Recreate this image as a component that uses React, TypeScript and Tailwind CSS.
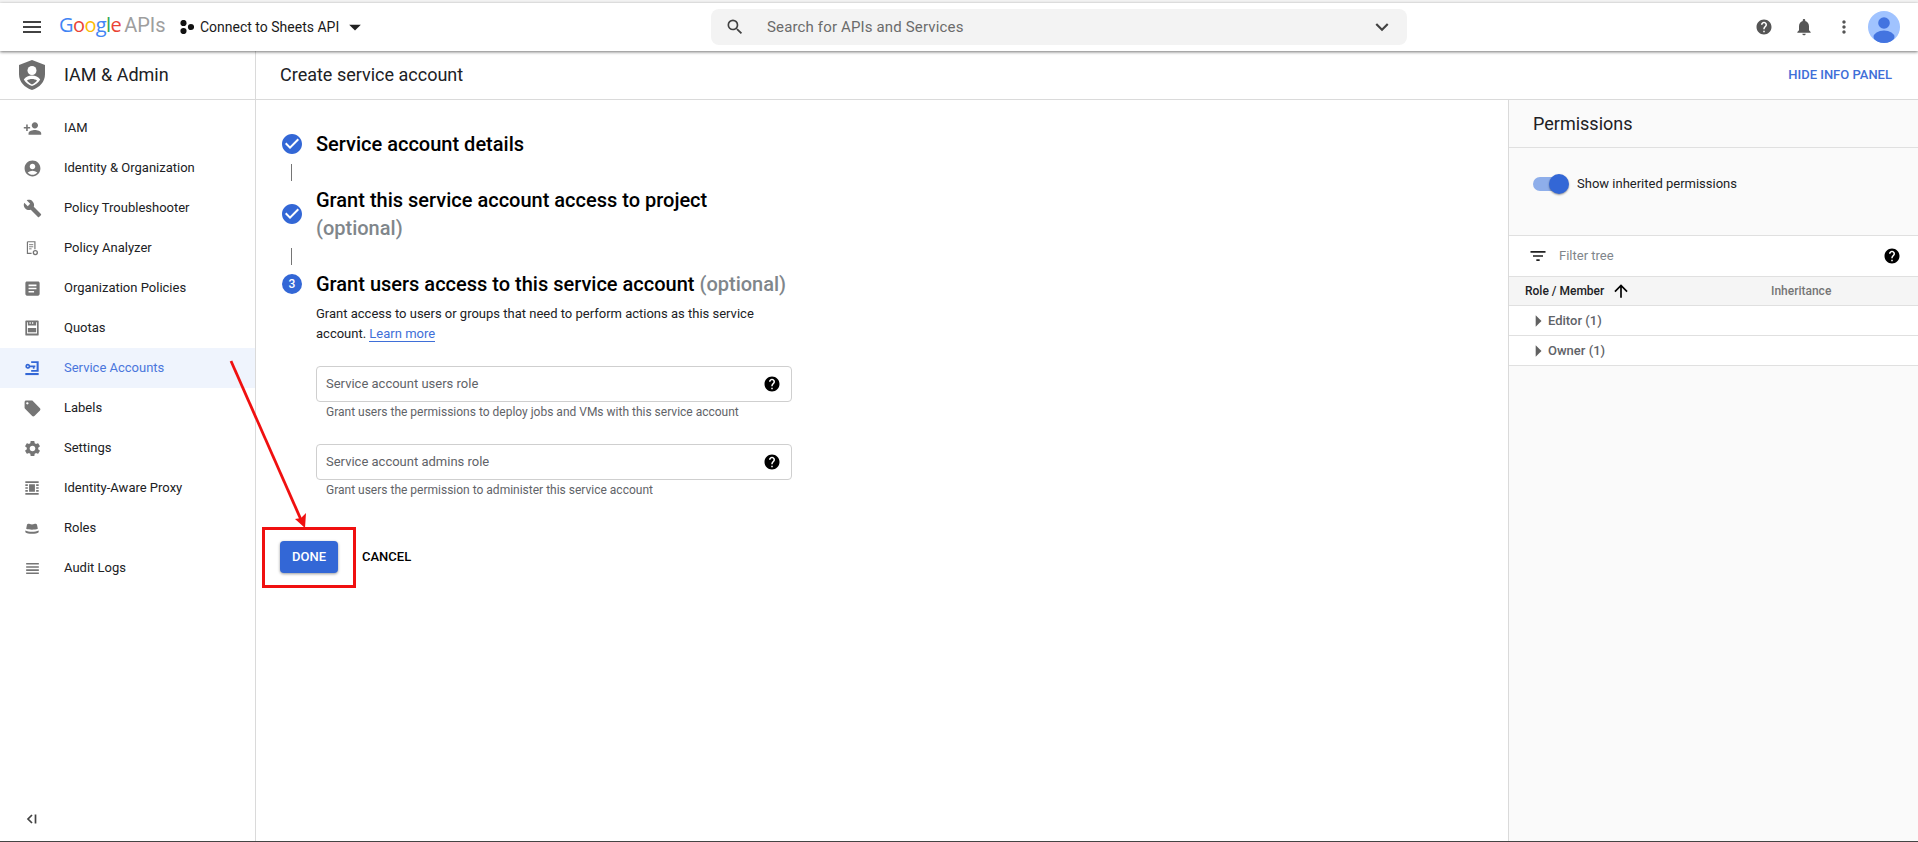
import React from "react";
import {
  MdMenu, MdArrowDropDown, MdSearch, MdExpandMore, MdHelp, MdNotifications, MdMoreVert,
  MdPersonAdd, MdAccountCircle, MdBuild, MdArticle, MdLocalOffer, MdSettings, MdViewHeadline,
  MdCheckCircle, MdFilterList, MdArrowUpward, MdArrowRight,
} from "react-icons/md";

const Analyzer = () => (
  <svg viewBox="0 0 24 24" className="w-[20px] h-[20px]" fill="none" stroke="#757575">
    <path d="M6.5 4.5h9v9M6.5 4.5v14h5" strokeWidth="1.4" />
    <path d="M8.5 8h5M8.5 10.5h5M8.5 13h3" strokeWidth="1.1" />
    <circle cx="16" cy="17.500" r="2.400" strokeWidth="1.600" />
  </svg>
);
const Quota = () => (
  <svg viewBox="0 0 24 24" className="w-[20px] h-[20px]" fill="#757575">
    <path d="M5 3h14a1 1 0 0 1 1 1v16a1 1 0 0 1-1 1H5a1 1 0 0 1-1-1V4a1 1 0 0 1 1-1zm1 2v13.500h12V5h-1v4H7V5H6zm3 0v2h1.500V5H9zm3 0v2h1.500V5H12zM7 12h10v5H7v-5z" fillRule="evenodd" />
  </svg>
);
const ServiceKey = () => (
  <svg viewBox="0 0 24 24" className="w-[20px] h-[20px]" fill="#3367d6">
    <path d="M4 18h16v2.500H4z" />
    <path d="M11 4h9v12.500h-9v-2h6.500V6H11z" />
    <path fillRule="evenodd" d="M7 7a3 3 0 0 1 2.800 2H16v2h-1v2h-2v-2H9.800A3 3 0 1 1 7 7zm0 2a1 1 0 1 0 0 2 1 1 0 0 0 0-2z" />
  </svg>
);
const Proxy = () => (
  <svg viewBox="0 0 24 24" className="w-[20px] h-[20px]" fill="#757575">
    <path d="M4 4h16v2H4zM4 18h16v2H4zM4 7.500h3v2H4zM17 7.500h3v2h-3zM4 14.500h3v2H4zM17 14.500h3v2h-3zM4 11h3v2H4zM17 11h3v2h-3zM8.500 7.500h7v9h-7z" />
  </svg>
);
const Hat = () => (
  <svg viewBox="0 0 24 24" className="w-[20px] h-[20px]" fill="#757575">
    <path d="M7.500 7c1.500 0 2.500.8 4.500.8S15 7 16.500 7c1 0 1.500 1 1.700 2l.8 4c-2 .8-4.300 1-7 1s-5-.2-7-1l.8-4c.2-1 .7-2 1.700-2z" />
    <path d="M4 15c2 1 5 1.500 8 1.500s6-.5 8-1.500v2c-1.500 1.200-4.500 2-8 2s-6.500-.8-8-2v-2z" />
  </svg>
);
const Shield = () => (
  <svg viewBox="0 0 26 30" className="w-[26px] h-[30px]">
    <path d="M13 0 L26 5 V14 C26 22 20.500 27.500 13 30 C5.500 27.500 0 22 0 14 V5 Z" fill="#6e6e6e" />
    <circle cx="13" cy="10.500" r="4.500" fill="#fff" />
    <path d="M4.800 19.500c1.700-2.700 5-4 8.200-4s6.500 1.300 8.200 4c-1.800 3-4.800 5.400-8.200 6.500-3.400-1.100-6.400-3.500-8.200-6.500z" fill="#fff" />
    <path d="M8 20.500c1.300-1 3.200-1.500 5-1.500s3.700.5 5 1.500c-1.200 1.700-3 3-5 3.900-2-.9-3.800-2.200-5-3.900z" fill="#6e6e6e" />
  </svg>
);
const Project = () => (
  <svg viewBox="0 0 14 14" className="w-[14px] h-[14px]" fill="#111">
    <circle cx="3.500" cy="3" r="3.100" />
    <circle cx="3.500" cy="11" r="3.100" />
    <circle cx="11" cy="7" r="3.100" />
  </svg>
);
const Avatar = () => (
  <svg viewBox="0 0 32 32" className="w-[32px] h-[32px]">
    <defs>
      <clipPath id="avatar-clip"><circle cx="16" cy="16" r="16" /></clipPath>
    </defs>
    <g clipPath="url(#avatar-clip)">
      <rect width="32" height="32" fill="#a0c3ff" />
      <circle cx="16" cy="12" r="5.800" fill="#4374e0" />
      <ellipse cx="16" cy="26" rx="10.500" ry="6.500" fill="#4374e0" />
    </g>
  </svg>
);
const Collapse = () => (
  <svg viewBox="0 0 12 12" className="w-[12px] h-[12px]" fill="none" stroke="#424242" strokeWidth="1.700">
    <path d="M6 2 L2 6 L6 10" />
    <path d="M9.500 1.500 V10.500" />
  </svg>
);

const navIcon = "w-[19px] h-[19px] text-[#757575]";
const nav: { label: string; icon: React.ReactNode; active?: boolean }[] = [
  { label: "IAM", icon: <MdPersonAdd className={navIcon} /> },
  { label: "Identity & Organization", icon: <MdAccountCircle className={navIcon} /> },
  { label: "Policy Troubleshooter", icon: <MdBuild className={navIcon} /> },
  { label: "Policy Analyzer", icon: <Analyzer /> },
  { label: "Organization Policies", icon: <MdArticle className={navIcon} /> },
  { label: "Quotas", icon: <Quota /> },
  { label: "Service Accounts", icon: <ServiceKey />, active: true },
  { label: "Labels", icon: <MdLocalOffer className={navIcon} /> },
  { label: "Settings", icon: <MdSettings className={navIcon} /> },
  { label: "Identity-Aware Proxy", icon: <Proxy /> },
  { label: "Roles", icon: <Hat /> },
  { label: "Audit Logs", icon: <MdViewHeadline className={navIcon} /> },
];

const Field = ({ label, help }: { label: string; help: string }) => (
  <div className="flex flex-col">
    <div className="h-[36px] w-[476px] border border-[#cfcfcf] rounded-[4px] flex items-center justify-between pl-[9px] pr-[10px]">
      <span className="text-[13px] text-[#5f6368]">{label}</span>
      <MdHelp className="w-[18px] h-[18px] text-black" />
    </div>
    <div className="text-[12px] leading-[16px] text-[#5f6368] pl-[10px] mt-[2px]">{help}</div>
  </div>
);

const Connector = () => <div className="w-[1px] h-[17px] bg-[#757575] ml-[30px]" />;

export default function App() {
  return (
    <div className="relative w-[1918px] h-[842px] overflow-hidden bg-white flex flex-col text-black font-['Roboto',sans-serif]">
      <div className="h-[3px] bg-[#f3f3f3]" />
      <header className="relative z-10 h-[48px] flex items-center bg-white shadow-[0_1px_3px_rgba(0,0,0,0.55)]">
        <MdMenu className="w-[24px] h-[24px] text-[#424242] ml-[20px]" />
        <div className="ml-[15px] w-[106px] flex items-baseline text-[20px] leading-none font-['Open_Sans',sans-serif] -mt-[5px] tracking-[-0.6px]">
          <span className="text-[#4285f4]">G</span>
          <span className="text-[#ea4335]">o</span>
          <span className="text-[#fbbc05]">o</span>
          <span className="text-[#4285f4]">g</span>
          <span className="text-[#34a853]">l</span>
          <span className="text-[#ea4335]">e</span>
          <span className="text-[#9e9e9e] ml-[3px] font-['Roboto',sans-serif] tracking-normal">APIs</span>
        </div>
        <div className="ml-[15px]"><Project /></div>
        <span className="ml-[6px] text-[14px] text-[#1a1a1a] w-[141px] whitespace-nowrap">Connect to Sheets API</span>
        <MdArrowDropDown className="w-[28px] h-[28px] text-[#212121]" />
        <div className="ml-[342px] w-[696px] h-[36px] bg-[#f3f3f3] rounded-[8px] flex items-center pl-[14px] pr-[12px]">
          <MdSearch className="w-[20px] h-[20px] text-[#424242]" />
          <span className="ml-[22px] text-[15px] tracking-[0.15px] text-[#6b6b6b] flex-1">Search for APIs and Services</span>
          <MdExpandMore className="w-[26px] h-[26px] text-[#424242]" />
        </div>
        <div className="ml-auto flex items-center">
          <MdHelp className="w-[18px] h-[18px] text-[#555]" />
          <MdNotifications className="w-[20px] h-[20px] text-[#555] ml-[21px]" />
          <MdMoreVert className="w-[20px] h-[20px] text-[#555] ml-[20px]" />
          <div className="ml-[14px] mr-[18px] flex"><Avatar /></div>
        </div>
      </header>
      <div className="flex h-[49px]">
        <div className="w-[256px] border-r border-[#dadada] border-b flex items-center pl-[19px] pb-[1px]">
          <Shield />
          <span className="ml-[19px] text-[18px] text-[#202124]">IAM &amp; Admin</span>
        </div>
        <div className="flex-1 border-b border-[#dadada] flex items-center justify-between pl-[24px] pr-[26px] pb-[1px]">
          <span className="text-[18px] text-[#202124]">Create service account</span>
          <span className="text-[13px] font-medium text-[#3f6fd8]">HIDE INFO PANEL</span>
        </div>
      </div>
      <div className="flex flex-1 min-h-0">
        <aside className="w-[256px] border-r border-[#dadada] flex flex-col pt-[8px] pb-[16px]">
          {nav.map((n) => (
            <div key={n.label} className={`h-[40px] flex items-center pl-[20px] ${n.active ? "bg-[#eff4fd]" : ""}`}>
              <span className="w-[24px] h-[24px] flex items-center justify-center">{n.icon}</span>
              <span className={`ml-[20px] text-[13px] ${n.active ? "text-[#4a76dc]" : "text-[#202124]"}`}>{n.label}</span>
            </div>
          ))}
          <div className="mt-auto pl-[26px] flex"><Collapse /></div>
        </aside>
        <main className="flex-1 flex flex-col pl-[5px] pt-[32px]">
          <div className="w-[560px] flex flex-col">
            <div className="flex items-center h-[24px]">
              <MdCheckCircle className="w-[24px] h-[24px] text-[#3367d6] ml-[19px]" />
              <span className="ml-[12px] text-[20px] font-medium leading-[24px]">Service account details</span>
            </div>
            <div className="mt-[8px]"><Connector /></div>
            <div className="flex items-center mt-[5px]">
              <MdCheckCircle className="w-[24px] h-[24px] text-[#3367d6] ml-[19px] shrink-0" />
              <div className="ml-[12px] text-[20px] font-medium leading-[28px]">
                <div>Grant this service account access to project</div>
                <div className="text-[#80868b]">(optional)</div>
              </div>
            </div>
            <div className="mt-[6px]"><Connector /></div>
            <div className="flex items-center h-[24px] mt-[7px] whitespace-nowrap">
              <span className="ml-[21px] w-[20px] h-[20px] rounded-full bg-[#3367d6] text-white text-[12px] font-medium flex items-center justify-center">3</span>
              <span className="ml-[14px] text-[20px] font-medium leading-[24px]">Grant users access to this service account</span>
              <span className="ml-[5px] text-[20px] font-medium leading-[24px] text-[#80868b]">(optional)</span>
            </div>
            <p className="ml-[55px] mt-[8px] w-[490px] text-[13px] leading-[20px] text-[#202124]">
              Grant access to users or groups that need to perform actions as this service account.{" "}
              <span className="text-[#3f6fd8] border-b border-[#3f6fd8]">Learn more</span>
            </p>
            <div className="ml-[55px] mt-[22px] flex flex-col gap-[24px]">
              <Field label="Service account users role" help="Grant users the permissions to deploy jobs and VMs with this service account" />
              <Field label="Service account admins role" help="Grant users the permission to administer this service account" />
            </div>
            <div className="ml-[19px] mt-[43px] flex items-center">
              <button className="w-[58px] h-[32px] bg-[#3367d6] rounded-[4px] text-white text-[13px] font-medium shadow-[0_1px_3px_rgba(0,0,0,0.4)]">DONE</button>
              <span className="ml-[24px] text-[13px] font-medium text-black">CANCEL</span>
            </div>
          </div>
        </main>
        <section className="w-[410px] border-l border-[#dadada] bg-[#fafafa] flex flex-col">
          <div className="h-[48px] shrink-0 border-b border-[#e0e0e0] flex items-center pl-[24px] text-[18px] text-[#202124]">Permissions</div>
          <div className="h-[88px] shrink-0 border-b border-[#e0e0e0] flex pt-[26px] pl-[24px]">
            <div className="relative w-[36px] h-[20px] flex items-center">
              <div className="w-[34px] h-[14px] rounded-full bg-[#8eaeea]" />
              <div className="absolute right-0 top-0 w-[20px] h-[20px] rounded-full bg-[#3367d6] shadow-[0_1px_2px_rgba(0,0,0,0.4)]" />
            </div>
            <span className="ml-[8px] text-[13px] leading-[20px] text-[#202124]">Show inherited permissions</span>
          </div>
          <div className="h-[40px] shrink-0 bg-white flex items-center pl-[19px] pr-[17px]">
            <MdFilterList className="w-[20px] h-[20px] text-[#212121]" />
            <span className="ml-[11px] flex-1 text-[13px] text-[#80868b]">Filter tree</span>
            <MdHelp className="w-[18px] h-[18px] text-black" />
          </div>
          <div className="h-[30px] shrink-0 bg-[#f5f5f5] border-y border-[#e0e0e0] flex items-center text-[12px] font-medium pl-[16px]">
            <span className="w-[80px] text-[#202124] whitespace-nowrap">Role / Member</span>
            <MdArrowUpward className="w-[20px] h-[20px] text-black ml-[6px]" />
            <span className="ml-[140px] text-[#757575]">Inheritance</span>
          </div>
          {["Editor (1)", "Owner (1)"].map((r) => (
            <div key={r} className="h-[30px] shrink-0 bg-white border-b border-[#e0e0e0] flex items-center pl-[20px] text-[13px] text-[#5f6368]">
              <MdArrowRight className="w-[28px] h-[28px] text-[#616161] -ml-[5px]" />
              <span className="-ml-[4px] font-medium">{r}</span>
            </div>
          ))}
        </section>
      </div>
      <div className="h-[1px] bg-[#444]" />

      <div className="absolute left-[262px] top-[527px] w-[94px] h-[61px] border-[3px] border-[#f01010] pointer-events-none" />
      <svg className="absolute left-[220px] top-[350px] pointer-events-none" width="100" height="190" viewBox="0 0 100 190">
        <path d="M11 11 L82 172" stroke="#f01010" strokeWidth="2.800" fill="none" />
        <path d="M85 178 L75 169 L81 168 L86 163 Z" fill="#f01010" />
      </svg>
    </div>
  );
}
